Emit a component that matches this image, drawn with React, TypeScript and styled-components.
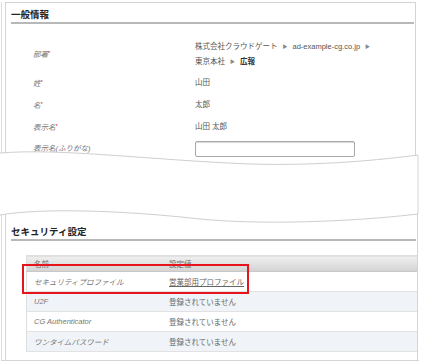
import React from "react";
import styled, { createGlobalStyle } from "styled-components";

const GlobalStyle = createGlobalStyle`
  html, body {
    margin: 0;
    padding: 0;
    background: #fff;
  }
  body {
    font-family: "Liberation Sans", "Noto Sans CJK JP", sans-serif;
    font-size: 7.5px;
    color: #555;
  }
`;

const Page = styled.div`
  position: relative;
  width: 421px;
  height: 364px;
  overflow: hidden;
`;

const Frame = styled.div`
  margin-left: 1px;
  width: 417px;
  border-left: 1px solid #dcdcdc;
  border-bottom: 1px solid #d4d4d4;
`;

const Panel = styled.div<{ $top?: boolean }>`
  margin-left: 3px;
  width: 411px;
  border-left: 1px solid #d4d4d4;
  border-right: 1px solid #d4d4d4;
  border-top: ${(p) => (p.$top ? "1px solid #d4d4d4" : "none")};
  margin-top: ${(p) => (p.$top ? "2px" : "0")};
  overflow: hidden;
`;

const TopPanel = styled(Panel)`
  height: 165px;
  padding-top: 5px;
  box-sizing: border-box;
`;

const BottomPanel = styled(Panel)`
  padding-top: 58px;
  padding-bottom: 8px;
`;

const Heading = styled.div`
  margin: 0 1px 0 5px;
  font-size: 9.5px;
  line-height: 14px;
  font-weight: bold;
  color: #222;
  border-bottom: 2px solid #b8b8b8;
`;

const Rows = styled.div`
  margin-top: 11.5px;
  padding-left: 27px;
`;

const Row = styled.div`
  display: flex;
  align-items: center;
  padding: 3px 0;
  line-height: 15px;
`;

const Label = styled.div`
  width: 162px;
  flex-shrink: 0;
  font-style: italic;
  color: #777;
  white-space: nowrap;
`;

const Req = styled.span`
  color: #e0242a;
  font-style: normal;
  font-size: 6px;
  vertical-align: 2px;
`;

const Value = styled.div`
  color: #555;
`;

const Strong = styled.span`
  font-weight: bold;
  color: #333;
`;

const Arrow = styled.span`
  color: #888;
  font-size: 5px;
  margin: 0 5px;
  vertical-align: 1px;
`;

const TextBox = styled.input`
  width: 160px;
  height: 16px;
  box-sizing: border-box;
  border: 1px solid #a8a8a8;
  border-radius: 2px;
  box-shadow: inset 0 1px 1px rgba(0, 0, 0, 0.15);
  margin: 0;
  padding: 0 3px;
`;

const TableWrap = styled.div`
  position: relative;
  margin: 14px 0 0 20px;
`;

const Table = styled.table`
  width: 400px;
  border-collapse: collapse;
  border: 1px solid #dedede;
`;

const Th = styled.th<{ $w?: number }>`
  height: 15px;
  padding: 0 0 0 ${(p) => (p.$w ? 7 : 6)}px;
  width: ${(p) => (p.$w ? `${p.$w}px` : "auto")};
  text-align: left;
  font-weight: normal;
  color: #6e6e6e;
  background: linear-gradient(#efefef, #d3d3d3);
  border-bottom: 1px solid #c8c8c8;
`;

const Tr = styled.tr<{ $alt?: boolean }>`
  background: ${(p) => (p.$alt ? "#f0f4f9" : "#fff")};
  border-bottom: 1px solid #e2e2e2;
`;

const NameCell = styled.td`
  height: 19px;
  padding: 0 0 0 7px;
  font-style: italic;
  color: #777;
`;

const ValueCell = styled.td`
  padding: 0 0 0 6px;
  color: #666;
`;

const LinkText = styled.span`
  text-decoration: underline;
  color: #666;
`;

const Highlight = styled.div`
  position: absolute;
  left: -4px;
  top: 9px;
  width: 227px;
  height: 30px;
  box-sizing: border-box;
  border: 2px solid #e8141c;
`;

const Tear = styled.svg`
  position: absolute;
  left: 0;
  top: 146px;
`;

const profile = [
  { name: "セキュリティプロファイル", value: "営業部用プロファイル", link: true },
  { name: "U2F", value: "登録されていません" },
  { name: "CG Authenticator", value: "登録されていません" },
  { name: "ワンタイムパスワード", value: "登録されていません" },
];

const App: React.FC = () => {
  return (
    <Page>
      <GlobalStyle />
      <Frame>
        <TopPanel $top>
          <Heading>一般情報</Heading>
          <Rows>
            <Row>
              <Label>
                部署<Req>*</Req>
              </Label>
              <Value>
                株式会社クラウドゲート<Arrow>▶</Arrow>ad-example-cg.co.jp<Arrow>▶</Arrow>
                <br />
                東京本社<Arrow>▶</Arrow>
                <Strong>広報</Strong>
              </Value>
            </Row>
            <Row>
              <Label>
                姓<Req>*</Req>
              </Label>
              <Value>山田</Value>
            </Row>
            <Row>
              <Label>
                名<Req>*</Req>
              </Label>
              <Value>太郎</Value>
            </Row>
            <Row>
              <Label>
                表示名<Req>*</Req>
              </Label>
              <Value>山田 太郎</Value>
            </Row>
            <Row>
              <Label>表示名(ふりがな)</Label>
              <TextBox />
            </Row>
          </Rows>
        </TopPanel>
        <BottomPanel>
          <Heading>セキュリティ設定</Heading>
          <TableWrap>
            <Table>
              <thead>
                <tr>
                  <Th $w={129}>名前</Th>
                  <Th>設定値</Th>
                </tr>
              </thead>
              <tbody>
                {profile.map((r, i) => (
                  <Tr key={r.name} $alt={i % 2 === 1}>
                    <NameCell>{r.name}</NameCell>
                    <ValueCell>
                      {r.link ? <LinkText>{r.value}</LinkText> : r.value}
                    </ValueCell>
                  </Tr>
                ))}
              </tbody>
            </Table>
            <Highlight />
          </TableWrap>
        </BottomPanel>
      </Frame>
      <Tear width="421" height="84" viewBox="0 146 421 84">
        <path
          d="M0,153 C60,148 150,160 250,164 C320,166 380,160 418,155 L421,155 L421,214 L418,214 C350,222 260,225 200,219 C120,210 40,208 0,215 Z"
          fill="#fff"
        />
        <path
          d="M0,153 C60,148 150,160 250,164 C320,166 380,160 418,155"
          fill="none"
          stroke="#cfcfcf"
          strokeWidth="1"
        />
        <path
          d="M0,215 C40,208 120,210 200,219 C260,225 350,222 418,214"
          fill="none"
          stroke="#cfcfcf"
          strokeWidth="1"
        />
        <line x1="418" y1="155" x2="418" y2="214" stroke="#d4d4d4" strokeWidth="1" />
      </Tear>
    </Page>
  );
};

export default App;
